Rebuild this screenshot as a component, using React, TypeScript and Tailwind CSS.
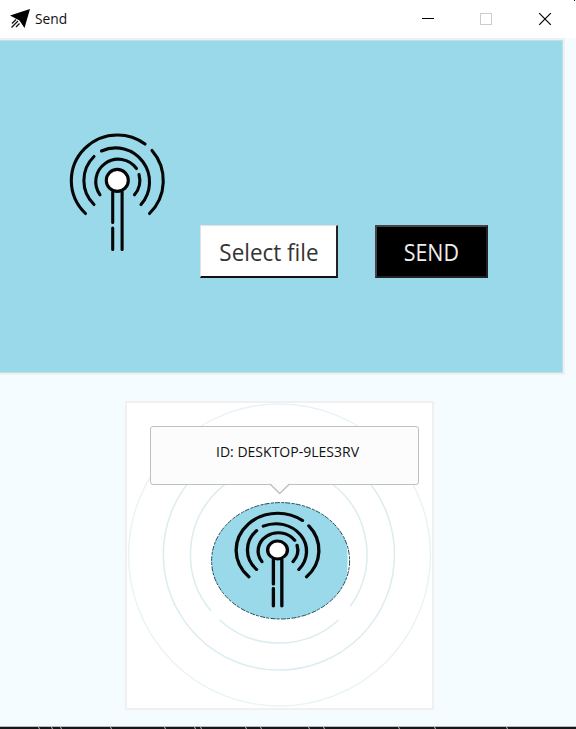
const flecks = [38, 51, 60, 110, 164, 194, 200, 245, 260, 308, 323, 398, 434, 506];

function AntennaPaths({ width = 3 }: { width?: number }) {
  return (
    <g fill="none" stroke="#060606" strokeLinecap="round" strokeWidth={width}>
      <path d="M-32 32.500A46 46 0 0 1 -46.200 0A46.200 46 0 0 1 0 -46A46 46 0 0 1 27.500 -37" />
      <path d="M34.500 -30.500A46 46 0 0 1 32 32.500" />
      <path d="M-23.500 23.500A33.500 33.500 0 0 1 -23.500 -24.500" />
      <path d="M-16 -30A34 34 0 0 1 23.500 23.500" />
      <path d="M-17.500 13.800A22.300 22.300 0 0 1 19 -12.500" />
      <path d="M21.500 -6.500A22.300 22.300 0 0 1 17 13.800" />
      <path d="M-4.800 11V41.500M-4.800 47V68.500M4.600 11V68.500" />
      <circle cx="-0.200" cy="-0.600" r="11" fill="#fff" />
    </g>
  );
}

function TitleBar() {
  return (
    <header className="flex h-[38px] shrink-0 items-center bg-white">
      <svg className="ml-[9px] h-5 w-[22px]" viewBox="0 0 22 20" aria-hidden="true">
        <path d="M21 0L15.500 19L10.500 11.500L1 6.500Z" fill="#000" />
        <path d="M7 10.500L3 14.500M9 12L2.500 18.500M10.500 14.500L7 18" fill="none" stroke="#111" strokeWidth="1.300" />
      </svg>
      <span className="mb-[2px] ml-1 w-[344px] origin-left scale-x-[0.92] text-[15px] leading-5">Send</span>
      <div className="ml-auto flex items-center">
        <svg className="h-[38px] w-[154px]" viewBox="421 0 154 38" fill="none" aria-hidden="true">
          <path d="M422 18.500H434" stroke="#000" />
          <rect x="480.500" y="13.500" width="11" height="11" stroke="#ccc" />
          <path d="M539.200 13.200L550.800 24.800M550.800 13.200L539.200 24.800" stroke="#000" strokeWidth="1.200" />
          <path d="M574 0H575V1H574Z" fill="#111" />
        </svg>
        <span className="w-px" />
      </div>
    </header>
  );
}

export default function App() {
  return (
    <div className="flex h-[729px] w-[576px] flex-col overflow-hidden bg-[#f4fcff] font-['Open_Sans',sans-serif] text-[#111]">
      <TitleBar />
      <section className="flex h-[337px] w-[565px] shrink-0 border-y-2 border-r-2 border-[#f0f0f0] bg-[#9ad9ea]">
        <div className="flex h-full w-full items-start border-y border-r border-[#b9e1ec]">
          <svg className="mt-[88px] ml-[66px] h-[126px] w-[102px]" viewBox="-51.500 -52 102 126" aria-hidden="true">
            <AntennaPaths width={3.1} />
          </svg>
          <button className="mt-[184px] ml-8 flex h-[53px] w-[138px] items-center justify-center border-t border-r-2 border-b-2 border-l border-t-[#e3e3e3] border-r-[#222] border-b-[#111] border-l-[#e3e3e3] bg-white text-[23.5px] leading-none text-[#333]">
            <span className="mt-1 scale-x-[0.955] whitespace-nowrap">Select file</span>
          </button>
          <button className="mt-[184px] ml-[37px] flex h-[53px] w-[113px] items-center justify-center border-2 border-t-[#444] border-r-[#222] border-b-[#222] border-l-[#444] bg-black text-[23.5px] leading-none text-[#eee]">
            <span className="mt-[2px] scale-x-[0.91] whitespace-nowrap">SEND</span>
          </button>
        </div>
      </section>
      <main className="flex h-[351px] shrink-0 items-start pt-[26px] pl-[125px]">
        <div className="relative h-[309px] w-[309px] border-2 border-[#f0f0f0] bg-white">
          <svg className="h-[305px] w-[305px]" viewBox="127 403 305 305" fill="none" aria-hidden="true">
            <circle cx="279.500" cy="555" r="151" stroke="#e8f3f5" strokeWidth="1.400" />
            <circle cx="278.900" cy="554.500" r="115.600" stroke="#dcecef" strokeWidth="1.500" />
            <path d="M211 611A88.300 88.300 0 1 1 350 606.500M219.500 620A88.300 88.300 0 0 0 338.500 620" stroke="#dcecef" strokeWidth="1.500" />
            <ellipse cx="280.600" cy="560.800" rx="69" ry="58.200" fill="#9ad9ea" />
            <path d="M346.500 544.500Q348.800 560 346.500 577L349 571V550Z" fill="#fff" />
            <ellipse cx="280.600" cy="560.800" rx="69" ry="58.200" stroke="#244b57" strokeDasharray="5 1.500 3 1" />
            <g transform="translate(277.700 550.500) scale(.9 .81)">
              <AntennaPaths width={3.7} />
            </g>
          </svg>
          <div className="absolute top-[23px] left-[23px] flex h-[59px] w-[269px] items-center justify-center rounded-[3px] border-[1.5px] border-[#c0c0c0] bg-[#fcfcfc]">
            <span className="mt-[-9px] ml-[6px] scale-x-[0.935] text-[15px] leading-5 whitespace-nowrap">ID: DESKTOP-9LES3RV</span>
            <svg className="absolute top-[56px] left-[118px] h-3 w-[22px]" viewBox="0 0 22 12" aria-hidden="true">
              <path d="M1 0H20.500L10.700 10.500Z" fill="#fcfcfc" />
              <path d="M1 1L10.700 10.500L20.500 1" fill="none" stroke="#c0c0c0" strokeWidth="1.500" />
            </svg>
          </div>
        </div>
      </main>
      <footer className="h-[3px] shrink-0 border-t border-[#b8bec0] bg-[#17171a]">
        <svg className="block h-[2px] w-[576px]" viewBox="0 0 576 2" aria-hidden="true">
          {flecks.map((x) => (
            <path key={x} d={`M${x} 0H${x + 1}L${x + 2} 2H${x + 1}Z`} fill="#bfc3ca" />
          ))}
        </svg>
      </footer>
    </div>
  );
}
